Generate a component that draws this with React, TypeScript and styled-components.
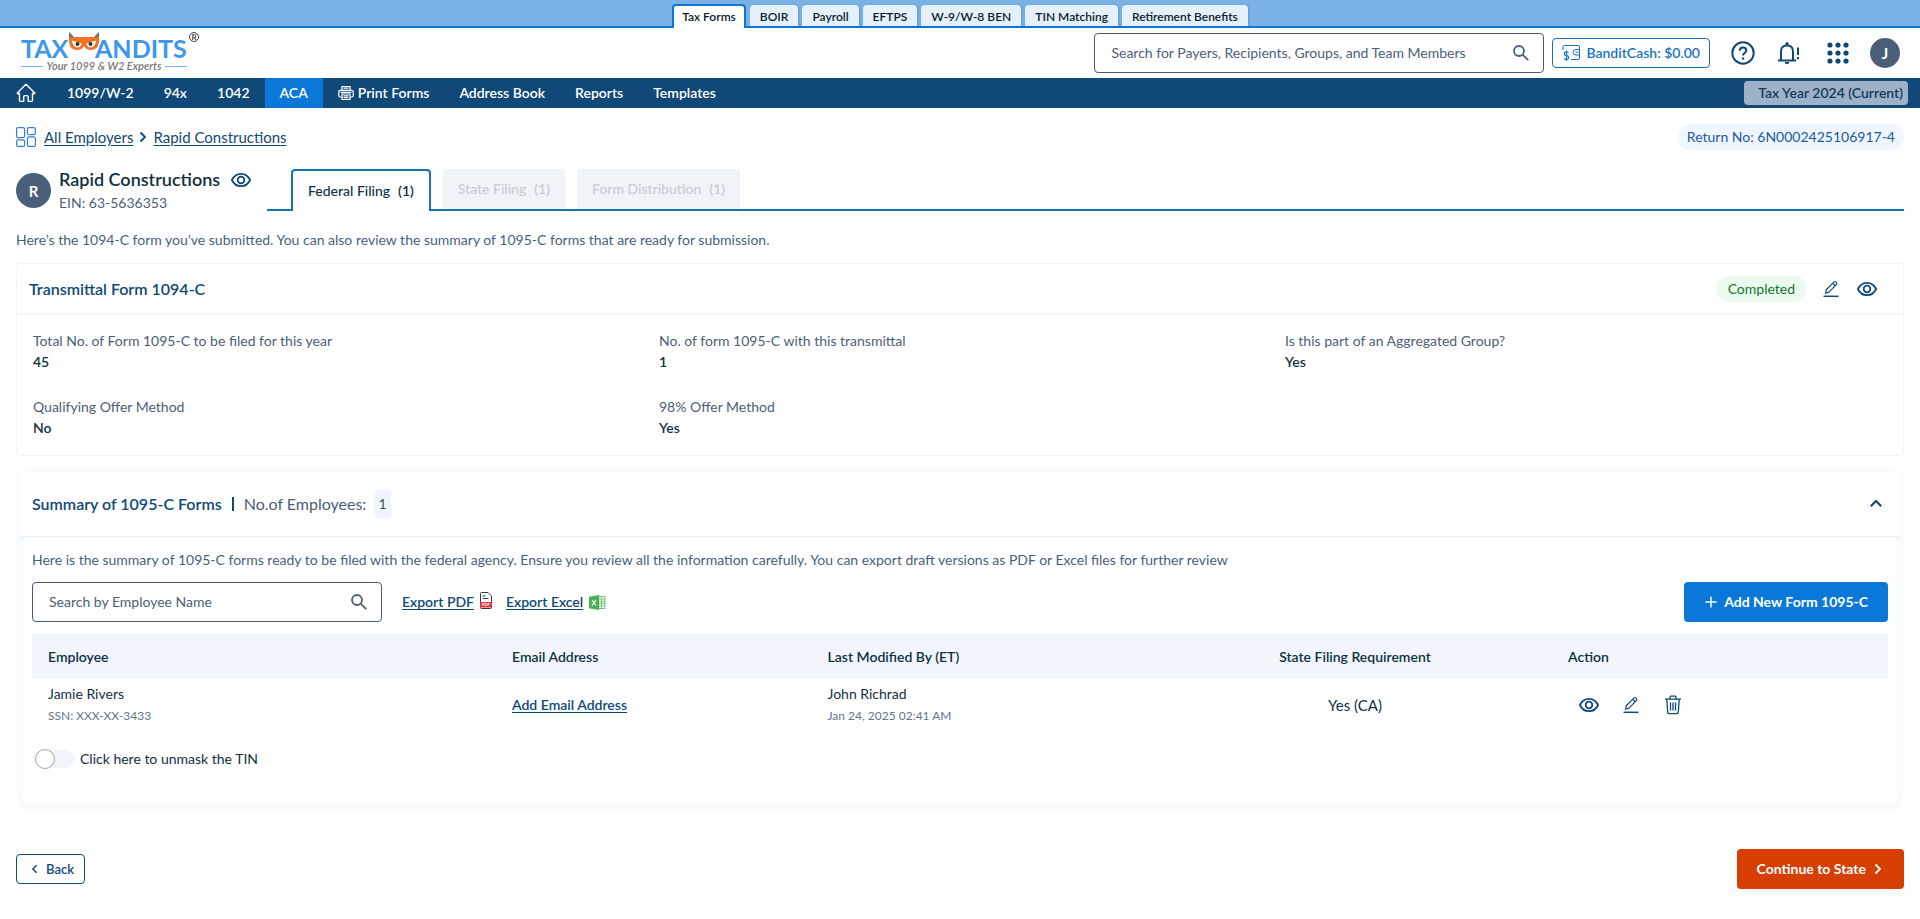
import React from "react";
import styled, { createGlobalStyle } from "styled-components";

const c = {
  navy: "#104877",
  blue: "#0b78d9",
  ink: "#12303f",
  slate: "#4b6078",
  line: "#f0f4f8",
};

const Global = createGlobalStyle`
  *, *::before, *::after { box-sizing: border-box; }
  body {
    margin: 0;
    background: #fff;
    color: ${c.ink};
    font-family: Lato, "Open Sans", sans-serif;
    font-size: 14px;
    line-height: 22px;
  }
  button, input { font: inherit; color: inherit; }
  button { cursor: pointer; }
  a { color: ${c.navy}; }
  h1, h2, p, dl, dd { margin: 0; }
  svg { display: block; flex: none; }
`;

/* ---------- top strip ---------- */
const ProductStrip = styled.nav`
  display: flex;
  justify-content: center;
  align-items: flex-end;
  gap: 4px;
  height: 28px;
  background: #7ab2e5;
  border-bottom: 2px solid ${c.blue};
`;
const ProductTab = styled.a<{ $active?: boolean }>`
  display: flex;
  align-items: center;
  justify-content: center;
  height: ${(p) => (p.$active ? 24 : 21)}px;
  margin-bottom: ${(p) => (p.$active ? -2 : 0)}px;
  padding: ${(p) => (p.$active ? "0 8px" : "2px 10px 0")};
  border: ${(p) => (p.$active ? `2px solid ${c.blue}` : "0")};
  border-bottom: 0;
  border-radius: 4px 4px 0 0;
  background: ${(p) => (p.$active ? "#fff" : "#e4f0fd")};
  box-shadow: ${(p) => (p.$active ? "none" : "1px 0 2px rgba(40, 90, 150, 0.3)")};
  color: #0c1c28;
  font-size: 12px;
  font-weight: 600;
  line-height: 16px;
  text-decoration: none;
`;

/* ---------- header ---------- */
const Header = styled.header`
  display: flex;
  align-items: center;
  justify-content: space-between;
  height: 50px;
  padding: 0 20px;
`;
const HeaderTools = styled.div`
  display: flex;
  align-items: center;
`;
const SearchBox = styled.label<{ $width: number }>`
  display: flex;
  align-items: center;
  width: ${(p) => p.$width}px;
  height: 40px;
  padding: 0 12px 0 16px;
  border: 1px solid #4a5a76;
  border-radius: 4px;
  color: ${c.slate};
  input {
    flex: 1;
    min-width: 0;
    padding: 0;
    border: 0;
    outline: 0;
    background: none;
  }
  input::placeholder { color: ${c.slate}; opacity: 1; }
`;
const CashButton = styled.button`
  display: flex;
  align-items: center;
  gap: 5px;
  height: 30px;
  margin: 0 20px 0 8px;
  padding: 0 9px;
  border: 1px solid #1372b8;
  border-radius: 4px;
  background: #fff;
  color: #1a73c4;
  font-weight: 600;
`;
const IconButton = styled.button<{ $size: number }>`
  display: grid;
  place-items: center;
  width: ${(p) => p.$size}px;
  height: ${(p) => p.$size}px;
  padding: 0;
  border: 0;
  background: none;
  color: ${c.navy};
`;
const HeaderIcons = styled.div`
  display: flex;
  align-items: center;
  gap: 22px;
`;
const Avatar = styled.span<{ $size: number }>`
  display: grid;
  place-items: center;
  flex: none;
  width: ${(p) => p.$size}px;
  height: ${(p) => p.$size}px;
  border-radius: 50%;
  background: ${c.slate};
  color: #fff;
  font-size: 15px;
  font-weight: 700;
`;
const UserButton = styled.button`
  margin-left: 18px;
  padding: 0;
  border: 0;
  background: none;
`;

/* ---------- main menu ---------- */
const Menu = styled.nav`
  display: flex;
  align-items: center;
  height: 30px;
  padding: 0 12px 0 16px;
  background: ${c.navy};
  color: #fff;
`;
const HomeLink = styled.a`
  margin-right: 16px;
  color: #fff;
`;
const MenuLink = styled.a<{ $active?: boolean }>`
  display: flex;
  align-items: center;
  gap: 4px;
  height: 30px;
  padding: 0 15px;
  background: ${(p) => (p.$active ? c.blue : "transparent")};
  color: #fff;
  font-size: 14px;
  font-weight: 600;
  text-decoration: none;
`;
const YearChip = styled.button`
  height: 24px;
  margin-left: auto;
  padding: 0 5px 0 14px;
  border: 0;
  border-radius: 4px;
  background: #9db2c8;
  color: #16395a;
  font-weight: 600;
`;

/* ---------- page ---------- */
const Main = styled.main`
  padding: 16px 16px 24px;
`;
const CrumbRow = styled.div`
  display: flex;
  align-items: center;
  justify-content: space-between;
  height: 26px;
`;
const Crumbs = styled.nav`
  display: flex;
  align-items: center;
  gap: 4px;
  color: ${c.navy};
  font-size: 15px;
  a { text-underline-offset: 2px; }
  svg:first-child { margin-right: 4px; }
`;
const ReturnNo = styled.span`
  padding: 2px 9px;
  border-radius: 13px;
  background: #f0f6ff;
  color: #1a5aa0;
`;
const EmployerRow = styled.div`
  display: flex;
  align-items: flex-start;
  margin-top: 17px;
`;
const Employer = styled.div`
  display: flex;
  align-items: center;
  gap: 8px;
  flex: 0 0 251px;
`;
const EmployerName = styled.h1`
  display: flex;
  align-items: center;
  gap: 11px;
  font-size: 18px;
  font-weight: 600;
  line-height: 25px;
`;
const Ein = styled.p`
  color: ${c.slate};
`;
const FilingTabs = styled.div`
  display: flex;
  align-items: flex-start;
  gap: 12px;
  flex: 1;
  height: 42px;
  margin-top: 2px;
  padding-left: 24px;
  border-bottom: 2px solid #1873b4;
`;
const FilingTab = styled.button<{ $active?: boolean }>`
  display: flex;
  align-items: center;
  gap: 8px;
  height: ${(p) => (p.$active ? 42 : 40)}px;
  padding: 0 15px;
  border: ${(p) => (p.$active ? "2px solid #1873b4" : "0")};
  border-bottom: 0;
  border-radius: 4px 4px 0 0;
  background: ${(p) => (p.$active ? "#fff" : "#f0f3f7")};
  color: ${(p) => (p.$active ? c.ink : "#c6cdd6")};
  font-weight: 500;
  b { font-weight: 600; }
`;
const Intro = styled.p`
  margin: 14px 0 11px;
  color: ${c.slate};
  line-height: 24px;
`;
const Card = styled.section`
  border: 1px solid ${c.line};
  border-radius: 4px;
`;
const CardHead = styled.div`
  display: flex;
  align-items: center;
  height: 51px;
  padding: 0 26px 0 12px;
  border-bottom: 1px solid ${c.line};
`;
const CardTitle = styled.h2`
  color: ${c.navy};
  font-size: 16px;
  font-weight: 600;
  line-height: 24px;
`;
const CardActions = styled.div`
  display: flex;
  align-items: center;
  gap: 16px;
  margin-left: auto;
`;
const Status = styled.span`
  margin-right: -2px;
  padding: 2px 12px;
  border-radius: 13px;
  background: #ecfbf0;
  color: #15742c;
`;
const Facts = styled.dl`
  display: grid;
  grid-template-columns: repeat(3, 1fr);
  row-gap: 24px;
  padding: 15px 4px 17px;
`;
const Fact = styled.div`
  padding-left: 12px;
  line-height: 21px;
  dt { color: ${c.slate}; }
  dd { font-weight: 600; }
`;
const Summary = styled.section`
  margin: 16px 4px 0;
  border-radius: 4px;
  box-shadow: 0 0 8px rgba(20, 60, 110, 0.06);
`;
const SummaryHead = styled.div`
  display: flex;
  align-items: center;
  height: 65px;
  padding: 0 14px 0 12px;
  border-bottom: 1px solid #e9eef7;
`;
const Divider = styled.span`
  width: 2px;
  height: 14px;
  margin: 0 10px;
  background: ${c.navy};
`;
const CountLabel = styled.span`
  margin-right: 8px;
  color: ${c.slate};
  font-size: 16px;
`;
const Count = styled.span`
  padding: 3px 4px;
  border-radius: 4px;
  background: #eff4ff;
  color: #3c5270;
`;
const SummaryBody = styled.div`
  padding: 11px 12px 37px;
  box-shadow: inset 0 0 12px #f3f8fd;
`;
const Note = styled.p`
  color: ${c.slate};
  line-height: 24px;
`;
const Toolbar = styled.div`
  display: flex;
  align-items: center;
  margin: 10px 0 12px;
`;
const ExportLink = styled.a`
  display: flex;
  align-items: center;
  gap: 6px;
  margin-left: 20px;
  font-weight: 600;
  text-underline-offset: 2px;
  & + & { margin-left: 14px; }
`;
const Primary = styled.button<{ $color: string }>`
  display: flex;
  align-items: center;
  gap: 6px;
  height: 40px;
  margin-left: auto;
  padding: 0 20px;
  border: 0;
  border-radius: 4px;
  background: ${(p) => p.$color};
  color: #fff;
  font-weight: 700;
`;
const Table = styled.table`
  width: 100%;
  table-layout: fixed;
  border-collapse: collapse;
  th {
    height: 45px;
    padding: 0 16px;
    background: #f0f6fc;
    font-weight: 600;
    text-align: left;
  }
  td { padding: 4px 16px 6px; }
  td a { font-weight: 600; text-underline-offset: 2px; }
  small {
    display: block;
    color: #65758a;
    font-size: 12px;
  }
  .state { text-align: center; }
  td.state { font-size: 15px; }
`;
const RowActions = styled.div`
  display: flex;
  gap: 22px;
  padding-left: 11px;
`;
const Toggle = styled.label`
  display: flex;
  align-items: center;
  gap: 5px;
  width: fit-content;
  height: 20px;
  margin: 16px 0 0 3px;
  input {
    appearance: none;
    display: flex;
    align-items: center;
    width: 40px;
    height: 18px;
    margin: 0;
    border-radius: 9px;
    background: #f0f6fb;
  }
  input::before {
    content: "";
    width: 20px;
    height: 20px;
    flex: none;
    border: 1px solid #93a3bf;
    border-radius: 50%;
    background: #fff;
  }
  input:checked { justify-content: flex-end; background: ${c.blue}; }
`;
const Footer = styled.footer`
  display: flex;
  align-items: center;
  margin-top: 43px;
`;
const BackButton = styled.button`
  display: flex;
  align-items: center;
  gap: 6px;
  height: 30px;
  padding: 0 10px 0 13px;
  border: 1px solid ${c.navy};
  border-radius: 4px;
  background: #fff;
  color: ${c.navy};
  font-size: 13px;
  font-weight: 600;
`;

/* ---------- icons ---------- */
const Logo = () => (
  <svg width="181" height="42" viewBox="0 0 181 42" role="img" aria-label="TaxBandits">
    <g fontFamily="Lato, sans-serif">
      <text x="1" y="26" fontSize="25" fontWeight="700" fill="#3d97ea">TAX</text>
      <text x="75" y="26" fontSize="25" fontWeight="700" fill="#3d97ea">ANDITS</text>
      <text x="84" y="38" fontSize="11" fontWeight="600" fontStyle="italic" fill="#777" textAnchor="middle">Your 1099 &amp; W2 Experts</text>
      <text x="174" y="8" fontSize="8" fontWeight="700" fill="#444" textAnchor="middle">R</text>
    </g>
    <circle cx="174" cy="5" r="4.500" fill="none" stroke="#444" />
    <path d="M1 34.500h22M145 34.500h22" stroke="#7ab2e8" />
    <path d="M49 6V0l5 5zM79 6V0l-5 5z" fill="#6b6b6b" />
    <path d="M49 5h30v5q-1 8-8 8-5 0-7-4-2 4-7 4-7 0-8-8z" fill="#f07427" />
    <path d="M52 8.500l9.500 3q-.5 4-4.500 4-4.500-1-5-7zM76 8.500l-9.500 3q.5 4 4.500 4 4.500-1 5-7z" fill="#fff" />
    <circle cx="57.500" cy="12" r="2" fill="#333" />
    <circle cx="70.500" cy="12" r="2" fill="#333" />
  </svg>
);
const SearchIcon = () => (
  <svg width="20" height="20" viewBox="0 0 20 20" fill="none" stroke="currentColor" strokeWidth="1.800">
    <circle cx="8" cy="8" r="5" />
    <path d="M11.800 11.800l5.400 5.400" />
  </svg>
);
const EyeIcon = () => (
  <svg width="20" height="20" viewBox="0 0 20 20" fill="none" stroke="currentColor" strokeWidth="1.800">
    <path d="M.9 10C2.800 6 6 3.800 10 3.800S17.200 6 19.100 10C17.200 14 14 16.200 10 16.200S2.800 14 .9 10z" />
    <circle cx="10" cy="10" r="3.300" />
  </svg>
);
const PencilIcon = () => (
  <svg width="20" height="20" viewBox="0 0 20 20" fill="none" stroke="currentColor" strokeWidth="1.200" strokeLinejoin="round">
    <path d="M4.500 14.200l.9-3.700 7.500-7.400q1-.9 2 0l.5.500q1 1 0 2L8 13.100zM11.700 4.300l2.600 2.500" />
    <path d="M2.500 17.300h15" strokeWidth="1.500" />
  </svg>
);
const TrashIcon = () => (
  <svg width="20" height="20" viewBox="0 0 20 20" fill="none" stroke="currentColor" strokeWidth="1.300">
    <path d="M2 4.200h16M7 4V2q0-.8.8-.8h4.400q.8 0 .8.800v2M3.800 4.500l.9 12.600q.1 1.600 1.600 1.600h7.400q1.500 0 1.600-1.600l.9-12.600M7.500 7.500v8M10 7.500v8M12.500 7.500v8" />
  </svg>
);
const Chevron = ({ d, size = 12 }: { d: string; size?: number }) => (
  <svg width={size} height={size} viewBox="0 0 12 12" fill="none" stroke="currentColor" strokeWidth="1.800">
    <path d={d} />
  </svg>
);
const HomeIcon = () => (
  <svg width="20" height="20" viewBox="0 0 20 20" fill="none" stroke="currentColor" strokeWidth="1.400" strokeLinejoin="round">
    <path d="M1.200 10L10 1.300 18.800 10l-1.300 1.100-1-.8v6.900q0 1.200-1.200 1.200h-3.100v-4.600q0-1.200-1.200-1.200H8.900q-1.200 0-1.200 1.200v4.600H4.700q-1.200 0-1.200-1.200v-6.900l-1 .8z" />
  </svg>
);
const PrinterIcon = () => (
  <svg width="16" height="16" viewBox="0 0 16 16" fill="none" stroke="currentColor" strokeWidth="1.200">
    <path d="M4 5V1.500h8V5M3.500 12H2q-1.200 0-1.200-1.200V6.600Q.8 5.300 2 5.300h12q1.200 0 1.200 1.300v4.200Q15.200 12 14 12h-1.500M4 9h8v5.500H4zM2.500 7.300h11M5.500 10.800h5M5.500 12.600h5M5.500 3.200h5" />
  </svg>
);
const HelpIcon = () => (
  <svg width="26" height="26" viewBox="0 0 26 26" fill="none" stroke="currentColor" strokeWidth="2">
    <circle cx="13" cy="13" r="10.700" />
    <path d="M9.800 10.800q0-3.300 3.300-3.300 3.200 0 3.200 2.900 0 1.500-1.600 2.500-1.600 1-1.600 2.600" />
    <path d="M12 17.500h2.200v2.100H12z" fill="currentColor" stroke="none" />
  </svg>
);
const BellIcon = () => (
  <svg width="26" height="26" viewBox="3 0 26 26" fill="none" stroke="currentColor" strokeWidth="2">
    <path d="M3 20.500h18M6 20v-8.500Q6 5.500 12 5.500t6 6V20" />
    <path d="M10.500 5V3.500q0-1.500 1.500-1.500t1.500 1.500V5zM9.800 22h4.400q0 2.200-2.200 2.200T9.800 22z" fill="currentColor" stroke="none" />
    <path d="M23 7.500V15M23 17v2.200" />
  </svg>
);
const GridIcon = () => (
  <svg width="26" height="26" viewBox="0 0 26 26" fill="currentColor">
    {[5, 13, 21].map((y) => [5, 13, 21].map((x) => <circle key={`${x}-${y}`} cx={x - 1} cy={y} r="2.600" />))}
  </svg>
);
const CashIcon = () => (
  <svg width="19" height="18" viewBox="0 0 19 18" fill="none" stroke="currentColor">
    <path d="M1 6V3Q1 1.500 2.500 1.500h13.500q1.500 0 1.500 1.500v11q0 1.500-1.500 1.500H9" />
    <path d="M17.500 5.500h-3.500q-3 0-3 2.700 0 2.800 3 2.800h3.500M13.500 8.200h3" />
    <path d="M6.500 8.700Q5.800 7.900 4.500 7.900 2.300 7.900 2.300 9.700T4.500 11.600t2.200 1.900-2.200 1.900q-1.500 0-2.300-1M4.500 6.500v10.500" strokeWidth="1.100" />
  </svg>
);
const DashboardIcon = () => (
  <svg width="20" height="20" viewBox="0 0 20 20" fill="none" stroke="#3a80c8" strokeWidth="1.200">
    <rect x=".6" y=".6" width="8" height="10" rx="1.500" />
    <rect x="11.400" y=".6" width="8" height="7" rx="1.500" />
    <rect x=".6" y="12.900" width="8" height="6.500" rx="1.500" />
    <rect x="11.400" y="9.900" width="8" height="9.500" rx="1.500" />
  </svg>
);
const PdfIcon = () => (
  <svg width="12" height="20" viewBox="0 0 12 20">
    <path d="M.5 1.500q0-1 1-1H8l3.500 3.500v11.500q0 1-1 1h-9q-1 0-1-1z" fill="#fff" stroke="#2b3a55" />
    <path d="M2.500 4h3M2.500 6.500h6" stroke="#2b3a55" />
    <path d="M0 10h12v4.500q0 1-1 1H1q-1 0-1-1z" fill="#dd3838" />
    <text x="6" y="14" fontSize="4" fontWeight="700" fill="#fff" textAnchor="middle" fontFamily="Lato, sans-serif">PDF</text>
  </svg>
);
const ExcelIcon = () => (
  <svg width="17" height="15" viewBox="0 0 17 15">
    <path d="M9 1.500h7v12H9" fill="#fff" stroke="#7cc47f" />
    <path d="M9 4h7M9 6.300h7M9 8.600h7M9 11h7M12.500 1.500v12" stroke="#7cc47f" />
    <path d="M0 1.800L10 0v15L0 13.200z" fill="#4caf50" />
    <path d="M3 5l4 5.500M7 5l-4 5.500" stroke="#fff" strokeWidth="1.200" />
  </svg>
);
const PlusIcon = () => (
  <svg width="14" height="14" viewBox="0 0 14 14" stroke="currentColor" strokeWidth="1.400">
    <path d="M7 1.500v11M1.500 7h11" />
  </svg>
);

const products = ["Tax Forms", "BOIR", "Payroll", "EFTPS", "W-9/W-8 BEN", "TIN Matching", "Retirement Benefits"];
const menu = ["1099/W-2", "94x", "1042", "ACA", "Print Forms", "Address Book", "Reports", "Templates"];
const filings: [string, number][] = [["Federal Filing", 1], ["State Filing", 1], ["Form Distribution", 1]];
const facts: [string, string][] = [
  ["Total No. of Form 1095-C to be filed for this year", "45"],
  ["No. of form 1095-C with this transmittal", "1"],
  ["Is this part of an Aggregated Group?", "Yes"],
  ["Qualifying Offer Method", "No"],
  ["98% Offer Method", "Yes"],
];

export default function App() {
  return (
    <>
      <Global />
      <ProductStrip aria-label="Products">
        {products.map((p, i) => (
          <ProductTab key={p} href="#" $active={i === 0}>{p}</ProductTab>
        ))}
      </ProductStrip>
      <Header>
        <Logo />
        <HeaderTools>
          <SearchBox $width={450}>
            <input type="text" aria-label="Search for Payers, Recipients, Groups, and Team Members" placeholder="Search for Payers, Recipients, Groups, and Team Members" />
            <SearchIcon />
          </SearchBox>
          <CashButton type="button"><CashIcon />BanditCash: $0.00</CashButton>
          <HeaderIcons>
            <IconButton type="button" $size={26} aria-label="Help"><HelpIcon /></IconButton>
            <IconButton type="button" $size={26} aria-label="Notifications"><BellIcon /></IconButton>
            <IconButton type="button" $size={26} aria-label="Apps"><GridIcon /></IconButton>
          </HeaderIcons>
          <UserButton type="button"><Avatar $size={30}>J</Avatar></UserButton>
        </HeaderTools>
      </Header>
      <Menu aria-label="Main">
        <HomeLink href="#" aria-label="Home"><HomeIcon /></HomeLink>
        {menu.map((m) => (
          <MenuLink key={m} href="#" $active={m === "ACA"}>
            {m === "Print Forms" && <PrinterIcon />}
            {m}
          </MenuLink>
        ))}
        <YearChip type="button">Tax Year 2024 (Current)</YearChip>
      </Menu>
      <Main>
        <CrumbRow>
          <Crumbs aria-label="Breadcrumb">
            <DashboardIcon />
            <a href="#">All Employers</a>
            <Chevron d="M3.500 1.500L8 6l-4.500 4.500" />
            <a href="#">Rapid Constructions</a>
          </Crumbs>
          <ReturnNo>Return No: 6N0002425106917-4</ReturnNo>
        </CrumbRow>
        <EmployerRow>
          <Employer>
            <Avatar $size={35}>R</Avatar>
            <div>
              <EmployerName>
                Rapid Constructions
                <IconButton type="button" $size={20} aria-label="View employer"><EyeIcon /></IconButton>
              </EmployerName>
              <Ein>EIN: 63-5636353</Ein>
            </div>
          </Employer>
          <FilingTabs role="tablist">
            {filings.map(([label, n], i) => (
              <FilingTab key={label} type="button" role="tab" aria-selected={i === 0} $active={i === 0}>
                {label}<b>({n})</b>
              </FilingTab>
            ))}
          </FilingTabs>
        </EmployerRow>
        <Intro>Here’s the 1094-C form you’ve submitted. You can also review the summary of 1095-C forms that are ready for submission.</Intro>
        <Card>
          <CardHead>
            <CardTitle>Transmittal Form 1094-C</CardTitle>
            <CardActions>
              <Status>Completed</Status>
              <IconButton type="button" $size={20} aria-label="Edit form"><PencilIcon /></IconButton>
              <IconButton type="button" $size={20} aria-label="View form"><EyeIcon /></IconButton>
            </CardActions>
          </CardHead>
          <Facts>
            {facts.map(([k, v]) => (
              <Fact key={k}><dt>{k}</dt><dd>{v}</dd></Fact>
            ))}
          </Facts>
        </Card>
        <Summary>
          <SummaryHead>
            <CardTitle>Summary of 1095-C Forms</CardTitle>
            <Divider />
            <CountLabel>No.of Employees:</CountLabel>
            <Count>1</Count>
            <CardActions>
              <IconButton type="button" $size={20} aria-label="Collapse summary"><Chevron size={14} d="M1.500 8L6 3.500 10.500 8" /></IconButton>
            </CardActions>
          </SummaryHead>
          <SummaryBody>
            <Note>Here is the summary of 1095-C forms ready to be filed with the federal agency. Ensure you review all the information carefully. You can export draft versions as PDF or Excel files for further review</Note>
            <Toolbar>
              <SearchBox $width={350}>
                <input type="text" aria-label="Search by Employee Name" placeholder="Search by Employee Name" />
                <SearchIcon />
              </SearchBox>
              <ExportLink href="#">Export PDF<PdfIcon /></ExportLink>
              <ExportLink href="#">Export Excel<ExcelIcon /></ExportLink>
              <Primary type="button" $color={c.blue}><PlusIcon />Add New Form 1095-C</Primary>
            </Toolbar>
            <Table>
              <colgroup>
                <col width="25%" />
                <col width="17%" />
                <col />
                <col width="394" />
                <col width="336" />
              </colgroup>
              <thead>
                <tr>
                  <th>Employee</th>
                  <th>Email Address</th>
                  <th>Last Modified By (ET)</th>
                  <th className="state">State Filing Requirement</th>
                  <th>Action</th>
                </tr>
              </thead>
              <tbody>
                <tr>
                  <td>Jamie Rivers<small>SSN: XXX-XX-3433</small></td>
                  <td><a href="#">Add Email Address</a></td>
                  <td>John Richrad<small>Jan 24, 2025 02:41 AM</small></td>
                  <td className="state">Yes (CA)</td>
                  <td>
                    <RowActions>
                      <IconButton type="button" $size={20} aria-label="View"><EyeIcon /></IconButton>
                      <IconButton type="button" $size={20} aria-label="Edit"><PencilIcon /></IconButton>
                      <IconButton type="button" $size={20} aria-label="Delete"><TrashIcon /></IconButton>
                    </RowActions>
                  </td>
                </tr>
              </tbody>
            </Table>
            <Toggle><input type="checkbox" />Click here to unmask the TIN</Toggle>
          </SummaryBody>
        </Summary>
        <Footer>
          <BackButton type="button"><Chevron size={10} d="M8 1.500L3.500 6 8 10.500" />Back</BackButton>
          <Primary type="button" $color="#d63e02">Continue to State<Chevron d="M3.500 1.500L8 6l-4.500 4.500" /></Primary>
        </Footer>
      </Main>
    </>
  );
}
